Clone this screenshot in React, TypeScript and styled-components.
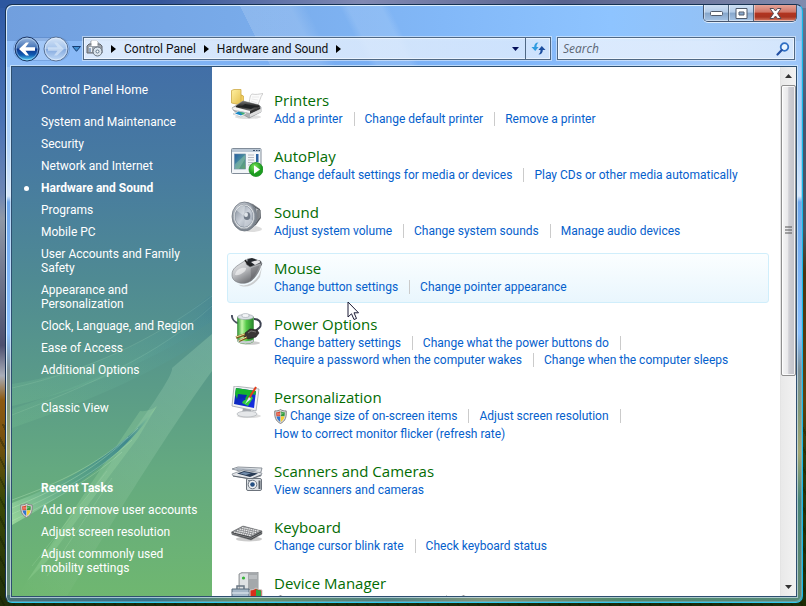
import React from 'react';
import styled, { createGlobalStyle, css } from 'styled-components';

const GlobalStyle = createGlobalStyle`
  *, *::before, *::after { box-sizing: border-box; }
  html, body, #root { height: 100%; }
  body {
    margin: 0;
    overflow: hidden;
    font-family: Roboto, "Open Sans", sans-serif;
    font-size: 12px;
    line-height: 14px;
  }
  button { margin: 0; padding: 0; border: 0; background: none; font: inherit; color: inherit; }
  a { color: inherit; text-decoration: none; }
  a:hover { text-decoration: underline; }
  ul { margin: 0; padding: 0; list-style: none; }
  svg { display: block; flex: none; }
`;

const Desktop = styled.div`
  height: 100vh;
  padding: 4px 3px 3px 5px;
  background:
    linear-gradient(90deg, #2c57a0, #35569b 20%, #8189b2 45%, #58638f 70%, #828bad) top / 100% 8px no-repeat,
    repeating-linear-gradient(63deg, transparent 0 3px, rgba(10, 20, 0, 0.3) 3px 5px, transparent 5px 9px) bottom / 100% 30% no-repeat,
    linear-gradient(180deg, #2f5aa6 0, #4a72b4 20%, #6d86b5 32%, #8f98a6 36%, #4d5070 57%, #a9aeb8 62%, #8d5a12 66%, #7a5210 72%, #3c4a08 82%, #20300a 100%) left / 8px 100% no-repeat,
    linear-gradient(180deg, #6f7794 0, #46536f 20%, #4b5260 38%, #4a3210 45%, #62400c 66%, #2f3806 76%, #1c2c05 100%) right / 8px 100% no-repeat,
    #1c2c0a;
`;

const Frame = styled.div`
  position: relative;
  display: flex;
  flex-direction: column;
  height: 100%;
  padding: 0 5px 5px;
  border: 1px solid #173252;
  border-right-color: #14b9ea;
  border-bottom-color: #2fc9ee;
  border-radius: 7px;
  box-shadow: inset 1px 1px 0 rgba(235, 248, 255, 0.85), inset -1px -1px 0 rgba(120, 190, 220, 0.5);
  background:
    linear-gradient(63deg, transparent 0 32%, rgba(255, 255, 255, 0.14) 32% 38%, transparent 40% 44%, rgba(255, 255, 255, 0.12) 45% 49%, transparent 50%) top / 100% 62px no-repeat,
    linear-gradient(90deg, #719fde 0, #78aae9 28%, #82b8f8 55%, #8ec4ff 76%, #98bfee 100%) top / 100% 36px no-repeat,
    linear-gradient(90deg, #8ebcf7 0, #78adf2 40%, #80b6fa 65%, #a8ccfb 88%, #9dc6f9 100%) 0 36px / 100% 26px no-repeat,
    linear-gradient(90deg, #497074, #34748b 18%, #67946d 30%, #4f8280 48%, #80977c 60%, #4f896c 78%, #588b79) bottom / 100% 7px no-repeat,
    linear-gradient(180deg, #93c2fc 0, #b0d2fa 23%, #d8e7fb 32%, #6fa7ec 33%, #8cc0ff 55%, #7d9098 61%, #859b7b 68%, #a5a875 75%, #478477 83%, #668970 100%);
`;

const TitleBar = styled.header`
  display: flex;
  justify-content: flex-end;
  height: 31px;
  flex: none;
`;

const CaptionButtons = styled.div`
  display: flex;
  height: 17px;
  overflow: hidden;
  border: 1px solid #46566f;
  border-top: 0;
  border-radius: 0 0 5px 5px;
  box-shadow: 0 1px 0 rgba(255, 255, 255, 0.7);
`;

const CaptionButton = styled.button<{ $close?: boolean }>`
  display: grid;
  place-items: center;
  width: ${p => (p.$close ? 42 : 25)}px;
  border-right: ${p => (p.$close ? '0' : '1px solid #53677f')};
  box-shadow: inset 1px -1px 0 rgba(255, 255, 255, 0.45);
  background: ${p =>
    p.$close
      ? 'linear-gradient(180deg, #e5a397 0, #cf7566 45%, #b23420 50%, #a83421 75%, #d97e66 100%)'
      : 'linear-gradient(180deg, #cfdff2 0, #b2cbe8 45%, #86a6cb 50%, #a5c3e5 100%)'};
`;

const NavBar = styled.nav`
  display: flex;
  align-items: center;
  height: 25px;
  padding: 0 2px 0 3px;
  flex: none;
`;

const TravelGroup = styled.div`
  display: flex;
  align-items: center;
  gap: 3px;
  height: 22px;
  border-radius: 12px;
  background: rgba(255, 255, 255, 0.2);
  box-shadow: 0 0 0 1px rgba(60, 100, 160, 0.25);
`;

const TravelButton = styled.button`
  height: 26px;
`;

const HistoryButton = styled.button`
  display: grid;
  place-items: center;
  width: 14px;
  height: 24px;
`;

const fieldBox = css`
  border: 1px solid #4f6884;
  outline: 1px solid rgba(255, 255, 255, 0.45);
  box-shadow: inset 0 0 0 1px rgba(255, 255, 255, 0.55);
  background: linear-gradient(90deg, rgba(240, 246, 254, 0.8), rgba(224, 237, 253, 0.8));
`;

const AddressBar = styled.div`
  ${fieldBox}
  display: flex;
  align-items: center;
  flex: 1;
  min-width: 0;
  height: 23px;
  padding-left: 2px;
`;

const Crumb = styled.a`
  color: #111;
  white-space: nowrap;
`;

const Chevron = styled.svg`
  margin: 0 8px;
`;

const DropButton = styled.button`
  display: grid;
  place-items: center;
  width: 19px;
  height: 21px;
  margin-left: auto;
`;

const RefreshButton = styled(DropButton)`
  width: 25px;
  margin-left: 0;
  border-left: 1px solid #4f6884;
`;

const SearchBox = styled.label`
  ${fieldBox}
  display: flex;
  align-items: center;
  flex: 0 1 238px;
  min-width: 0;
  height: 23px;
  margin-left: 6px;
  padding: 0 4px 0 5px;
`;

const SearchInput = styled.input`
  flex: 1;
  min-width: 0;
  padding: 0;
  border: 0;
  outline: 0;
  background: none;
  font: italic 12px/15px "Open Sans", "Noto Sans", sans-serif;
  &::placeholder { color: #5d6673; opacity: 1; }
`;

const Client = styled.div`
  display: flex;
  flex: 1;
  min-height: 0;
  margin-top: 5px;
  overflow: hidden;
  border: 1px solid #2e4f70;
  outline: 1px solid rgba(220, 238, 250, 0.65);
  background: #fff;
`;

const Sidebar = styled.aside`
  position: relative;
  display: flex;
  flex-direction: column;
  flex: none;
  width: 200px;
  padding: 16px 0 0 29px;
  color: #fff;
  background: linear-gradient(180deg, #426fa7 0, #477ba0 20%, #4f8a93 40%, #5a9b88 60%, #64a980 76%, #6fb770 100%);
`;

const Aurora = styled.svg`
  position: absolute;
  inset: auto 0 0 0;
`;

const TaskList = styled.ul<{ $top: number }>`
  position: relative;
  display: flex;
  flex-direction: column;
  gap: 8px;
  margin-top: ${p => p.$top}px;
`;

const Task = styled.li<{ $bold?: boolean }>`
  display: flex;
  position: relative;
  font-weight: ${p => (p.$bold ? 700 : 400)};
  white-space: nowrap;
`;

const Marker = styled.span`
  position: absolute;
  top: 0;
  left: -21px;
  display: grid;
  place-items: center;
  width: 13px;
  height: 15px;
`;

const Dot = styled.i`
  width: 5px;
  height: 5px;
  border-radius: 50%;
  background: #fff;
`;

const Heading = styled.h2`
  position: relative;
  margin: 66px 0 0;
  font-size: 12px;
  line-height: 14px;
`;

const Content = styled.main`
  display: flex;
  flex-direction: column;
  gap: 6px;
  flex: 1;
  min-width: 0;
  padding: 18px 11px 0 15px;
  overflow: hidden;
`;

const Category = styled.section<{ $hot?: boolean }>`
  display: flex;
  flex: none;
  gap: 11px;
  padding: 3px 3px 7px;
  border: 1px solid ${p => (p.$hot ? '#d0eefb' : 'transparent')};
  border-radius: 3px;
  background: ${p => (p.$hot ? 'linear-gradient(180deg, #fbfeff, #e9f6fd)' : 'none')};
`;

const CategoryBody = styled.div`
  padding-top: 1px;
  min-width: 0;
`;

const CategoryTitle = styled.h3`
  margin: 0;
  color: #036c03;
  font-family: "Open Sans", "Noto Sans", sans-serif;
  font-size: 15px;
  font-weight: 400;
  line-height: 20px;
  white-space: nowrap;
`;

const LinkRow = styled.div<{ $shield?: boolean }>`
  display: flex;
  align-items: center;
  height: ${p => (p.$shield ? 18 : 17)}px;
`;

const TaskLink = styled.a`
  display: flex;
  align-items: center;
  gap: 3px;
  color: #0560cc;
  white-space: nowrap;
`;

const Divider = styled.i`
  width: 1px;
  height: 14px;
  margin: 0 10px 0 11px;
  background: #cbcbcb;
`;

const ScrollBar = styled.div`
  display: flex;
  flex-direction: column;
  flex: none;
  width: 16px;
  border-left: 1px solid #e4e4e4;
  background: linear-gradient(90deg, #e9e9e9, #f2f2f2);
`;

const ScrollButton = styled.button`
  display: grid;
  place-items: center;
  height: 18px;
`;

const ScrollTrack = styled.div`
  flex: 1;
`;

const ScrollThumb = styled.div`
  display: grid;
  place-items: center;
  height: 59%;
  border: 1px solid #8f8f8f;
  border-radius: 2px;
  box-shadow: inset 0 0 0 1px rgba(255, 255, 255, 0.8);
  background: linear-gradient(90deg, #f6f6f6 0, #e8e8ea 45%, #cfcfd4 52%, #c1c1c8 100%);
`;

const Cursor = styled.svg`
  position: absolute;
  left: 341px;
  top: 296px;
`;

const Shield = () => (
  <svg width="13" height="15" viewBox="0 0 13 15" aria-hidden="true">
    <path d="M6.500 .5C5 1.600 3 2 .8 1.900C.4 8 1.500 12 6.500 14.500C11.500 12 12.600 8 12.200 1.900C10 2 8 1.600 6.500 .5Z" fill="#d9d9d9" stroke="#858585" />
    <path d="M6.200 2.200C5 3 3.800 3.300 2.300 3.300C2.200 5 2.300 6.200 2.500 7.300H6.200Z" fill="#dc3a1f" />
    <path d="M6.800 2.200C8 3 9.200 3.300 10.700 3.300C10.800 5 10.700 6.200 10.500 7.300H6.800Z" fill="#329b3c" />
    <path d="M2.600 7.600H6.200V12.900C4.200 11.700 3 10 2.600 7.600Z" fill="#3175cf" />
    <path d="M10.400 7.600H6.800V12.900C8.800 11.700 10 10 10.400 7.600Z" fill="#f7cf2d" />
    <path d="M3 3.800C6 3.500 8 3 10 4C8 6 5 7 2.800 6.500Z" fill="#fff" opacity=".3" />
  </svg>
);

const Icon = ({ children }: { children: React.ReactNode }) => (
  <svg width="32" height="32" viewBox="0 0 32 32" aria-hidden="true">{children}</svg>
);

const PrinterIcon = () => (
  <Icon>
    <defs>
      <linearGradient id="pr-f" x2="1" y2="1"><stop stopColor="#fff0a0" /><stop offset="1" stopColor="#e2ba45" /></linearGradient>
      <linearGradient id="pr-b" x2="0" y2="1"><stop stopColor="#777" /><stop offset=".5" stopColor="#252525" /><stop offset="1" stopColor="#9a9a9a" /></linearGradient>
    </defs>
    <ellipse cx="17" cy="28" rx="13" ry="2" fill="#ccc" opacity=".6" />
    <path d="M.5 1.500L3 .5H10V6L12 7V14L10 16L.5 14Z" fill="url(#pr-f)" stroke="#cda947" strokeWidth=".8" />
    <path d="M10 6V15L12.500 13V7Z" fill="#f2cf60" stroke="#c59f39" strokeWidth=".5" />
    <path d="M18 14C19 9 19 6 21 5C25 6 28 5 32 4.500C29 8 29 13 26 17Z" fill="#fcfcfc" stroke="#bcbcbc" strokeWidth=".7" />
    <path d="M21 8L28 8M20.500 10L27 11M20 12L26 14" stroke="#dedede" strokeWidth=".6" />
    <path d="M1 19L12 12L28 16L30 18V23L18 29L13 26L3 22Z" fill="#aeb0b3" stroke="#818488" strokeWidth=".6" />
    <path d="M5 17L12 12L28 16L29 18L19 23L5 19Z" fill="url(#pr-b)" />
    <path d="M14 15L25 17L20 20L10 18Z" fill="#202224" />
    <path d="M1 19L4 18L19 22L19 24L3 21Z" fill="#f5f5f5" />
    <path d="M19 22L29 18V20L19 25Z" fill="#333" />
    <path d="M2 25L7 22L16 24L10 28Z" fill="#fff" stroke="#aaa" strokeWidth=".5" />
    <path d="M4 24.500L7.500 22.500L14 24L10 26.500Z" fill="#1886c5" />
    <path d="M8 23L14 24L12 26Z" fill="#47ad67" />
    <path d="M19 25L30 20V23L19 28Z" fill="#ddd" />
  </Icon>
);

const AutoPlayIcon = () => (
  <Icon>
    <defs>
      <linearGradient id="ap-s" x2="1" y2="1"><stop stopColor="#245ca0" /><stop offset=".5" stopColor="#4a8fa0" /><stop offset="1" stopColor="#68a865" /></linearGradient>
      <radialGradient id="ap-g" cx=".4" cy=".3"><stop stopColor="#7be65a" /><stop offset="1" stopColor="#1c9c20" /></radialGradient>
    </defs>
    <rect x=".5" y="3.500" width="29.500" height="25" rx="1" fill="#f2f5f8" stroke="#818c99" />
    <path d="M1 4H29.500V7H1Z" fill="#bbc8d6" />
    <path d="M22 5.500H24M25 5.500H26.500M27.500 5.500H29" stroke="#3c526c" />
    <rect x="3.500" y="9" width="11" height="15" fill="url(#ap-s)" stroke="#6787a2" strokeWidth=".6" />
    <path d="M4 19L14 10V14L8 24H4Z" fill="#b2ddad" opacity=".35" />
    <path d="M17 10H23M17 12.500H23M17 15H23M17 17.500H22M17 20H20" stroke="#b5b9bf" />
    <rect x="25" y="9" width="2.500" height="8" fill="#2d63a1" />
    <circle cx="25" cy="24.500" r="7" fill="url(#ap-g)" stroke="#23902a" strokeWidth=".8" />
    <path d="M23 20.300L29 24.500L23 28.700Z" fill="#fff" />
  </Icon>
);

const SoundIcon = () => (
  <Icon>
    <defs>
      <radialGradient id="so-r" cx=".4" cy=".35"><stop stopColor="#eef0f2" /><stop offset=".6" stopColor="#b7bdc6" /><stop offset="1" stopColor="#7f8791" /></radialGradient>
      <linearGradient id="so-c" x2="1" y2="1"><stop stopColor="#818b98" /><stop offset=".5" stopColor="#cbd1da" /><stop offset="1" stopColor="#9099a6" /></linearGradient>
    </defs>
    <ellipse cx="21" cy="28" rx="10" ry="3" fill="#ddd" />
    <path d="M15 1L22 3L29 8L30 17L25 24L16 30Z" fill="#7a7e84" />
    <path d="M22 5L29 9V17L24 24" fill="#b6b9bd" stroke="#555a60" />
    <path d="M24 7L25 22M27 9V20" stroke="#4e5359" />
    <ellipse cx="13.500" cy="15.500" rx="12.500" ry="14.500" fill="url(#so-r)" stroke="#747b84" strokeWidth=".8" />
    <ellipse cx="13" cy="15.500" rx="10.500" ry="12.300" fill="#f0f2f4" stroke="#8f969f" strokeWidth=".7" />
    <ellipse cx="13" cy="15.500" rx="9" ry="10.800" fill="url(#so-c)" stroke="#717c8a" strokeWidth=".6" />
    <path d="M13 15L5 9C6 6 10 4 14 5Z" fill="#edf1f5" opacity=".45" />
    <path d="M14 17L22 19C20 23 17 26 13 26Z" fill="#dde2e8" opacity=".45" />
    <ellipse cx="16" cy="15" rx="3.300" ry="4" fill="#717b88" />
    <ellipse cx="15" cy="13.700" rx="2" ry="2.400" fill="#dfe4e9" />
  </Icon>
);

const MouseIcon = () => (
  <Icon>
    <defs>
      <linearGradient id="mo" x2=".7" y2="1"><stop stopColor="#f7f7f7" /><stop offset=".45" stopColor="#c4c6c9" /><stop offset="1" stopColor="#5c5e62" /></linearGradient>
    </defs>
    <path d="M6 27C16 31 23 26 28 18L31 10L29 20C24 27 18 31 10 29Z" fill="#bbb" opacity=".7" />
    <path d="M16 2L21 1L30 4L31 8C27 9 26 14 22 16L15 9Z" fill="#25282d" />
    <path d="M1 18C1 11 6 9 12 5L17 2L15 7L19 10L27 7L31 6C29 11 28 15 24 20C19 27 10 28 4 24C2 22.500 1 20.500 1 18Z" fill="url(#mo)" stroke="#76797e" strokeWidth=".6" />
    <path d="M20 5L27 3L30 5L24 8Z" fill="#e4e4e6" />
    <path d="M14 3L16 6L19 8L21 8" fill="none" stroke="#222" strokeWidth="1.500" />
    <path d="M4 18C5 12 11 10 15 11C16 14 9 19 4 18Z" fill="#fff" opacity=".55" />
    <path d="M20 11C19 15 21 19 19 23C24 20 27 13 29 8Z" fill="#4c4e53" opacity=".35" />
  </Icon>
);

const PowerIcon = () => (
  <Icon>
    <defs>
      <linearGradient id="po" x2="1"><stop stopColor="#2f9a35" /><stop offset=".28" stopColor="#c4f7a8" /><stop offset=".55" stopColor="#56ca49" /><stop offset="1" stopColor="#27862c" /></linearGradient>
    </defs>
    <ellipse cx="19" cy="30" rx="10" ry="1.800" fill="#ccc" />
    <path d="M.8 2C1 7 3 9 8 10.500" fill="none" stroke="#4c5163" strokeWidth="2" />
    <path d="M6.500 4V28C8 31.500 21 31.500 22.500 28V4Z" fill="url(#po)" stroke="#3f8a3d" strokeWidth=".6" />
    <path d="M6.500 26V28C8 31.500 21 31.500 22.500 28V26C20 29 9 29 6.500 26Z" fill="#c9ced3" />
    <ellipse cx="14.500" cy="4" rx="8" ry="2.600" fill="#dce1e6" stroke="#98a0a8" strokeWidth=".6" />
    <path d="M11 1.500C12 .3 17 .3 18 1.500V3.500C17 4.800 12 4.800 11 3.500Z" fill="#f4f6f8" stroke="#9aa3ab" strokeWidth=".6" />
    <path d="M23 6C28 6 30.500 9 29.500 13C28.500 16 25 16 24.500 19" fill="none" stroke="#3c4150" strokeWidth="2" />
    <path d="M14 20L19 16L26 17L28 20L25 24L17 26L13 24Z" fill="#3a3735" stroke="#1c1a19" strokeWidth=".6" />
    <path d="M17 20L20 18L25 19" fill="none" stroke="#8a8784" strokeWidth=".8" />
    <path d="M14 21.500L5 24.500M16 24.500L8 28" stroke="#7a5b1d" strokeWidth="2.400" />
    <path d="M13.500 21L5 24M15.500 24L8 27.500" stroke="#f3dfa0" />
  </Icon>
);

const DisplayIcon = () => (
  <Icon>
    <defs>
      <linearGradient id="di" x2="1" y2="1"><stop stopColor="#0726a4" /><stop offset="1" stopColor="#152ee9" /></linearGradient>
    </defs>
    <ellipse cx="18" cy="30" rx="12" ry="2" fill="#ddd" />
    <path d="M12 22H20L20 27H11Z" fill="#a4a8ae" />
    <ellipse cx="16" cy="28" rx="10" ry="3" fill="#e5e7e9" stroke="#a5a9ae" strokeWidth=".6" />
    <path d="M3 0L28 3L25 25L1 20Z" fill="#f2f3f4" stroke="#a0a4aa" strokeWidth=".8" />
    <path d="M5 2L25 5L23 22L3 18Z" fill="url(#di)" />
    <path d="M5 2L25 5L24.500 9C20 7 18 9 16 14L10 11L6 13L4 8Z" fill="#17b52e" />
    <path d="M7 8L16 9L14 13L19 14L15 18L12 12L6 13Z" fill="#0b27b2" />
    <path d="M12 15L20 10L22 12L17 20L11 17Z" fill="#30ca3c" />
    <path d="M17 14L25 1" stroke="#e13d1b" strokeWidth="2" />
    <path d="M14 18L18 11L20 13Z" fill="#d8eff9" />
  </Icon>
);

const ScannerIcon = () => (
  <Icon>
    <g transform="translate(0 5)">
      <path d="M1 4L7 2L31 3L30 7L24 10Z" fill="#dfe3e7" stroke="#767d86" strokeWidth=".8" />
      <path d="M6 3L27 4.500L22 7.500L3 4.500Z" fill="#aab3be" />
      <path d="M1 9L12 5L31 8L30 11L20 14L2 11Z" fill="#e4e6e9" stroke="#7d848c" strokeWidth=".7" />
      <path d="M6 8.500L13 6L27 8.500L19 12Z" fill="#293c55" />
      <path d="M9 8.500L13 7L20 8.300L15 10Z" fill="#718cab" />
      <path d="M2 11L20 14L30 10" fill="none" stroke="#5f6770" />
      <rect x="15.500" y="13.500" width="15" height="12" rx="1.500" fill="#dde1e5" stroke="#6c737c" />
      <path d="M17 15H21V16.500H17Z" fill="#7a828b" />
      <circle cx="21.500" cy="19.500" r="4.300" fill="#f3f4f6" stroke="#6d7681" />
      <circle cx="21.500" cy="19.500" r="2.300" fill="#244f82" />
      <rect x="27.500" y="15.500" width="2" height="8.500" fill="#59616b" />
    </g>
  </Icon>
);

const KeyboardIcon = () => (
  <Icon>
    <g transform="translate(0 5)">
      <ellipse cx="18" cy="18" rx="13" ry="2.500" fill="#ccc" />
      <path d="M.5 11L12 5L31 10V13L20 19L1 13.500Z" fill="#3c3e41" stroke="#77797b" strokeWidth=".5" />
      <path d="M.5 11L12 5L31 10L20 16Z" fill="#85878a" />
      <path d="M3 11L20 14.800M6 9.500L23 13.300M8.500 8L25.500 11.800M11 6.500L28 10.300" stroke="#ececec" strokeWidth="1.200" strokeDasharray="1.600 .6" />
      <path d="M1 12.500L20 17.300L31 11.500" fill="none" stroke="#a9abad" strokeWidth=".6" />
    </g>
  </Icon>
);

const DeviceIcon = () => (
  <Icon>
    <path d="M8 2L12 0H27V28H8Z" fill="#c6c9cc" stroke="#818589" strokeWidth=".8" />
    <path d="M17 1H27V28H17Z" fill="#a4a8ab" />
    <path d="M9 2H17V24H9Z" fill="#dfe2e4" />
    <path d="M18 4H26M18 6H26" stroke="#d1d4d7" />
    <circle cx="12.500" cy="6" r="1.600" fill="#36b438" />
    <path d="M6 17V14H13V17" fill="none" stroke="#6a7784" strokeWidth="1.500" />
    <path d="M1 17H18V30H1Z" fill="#a5b7c7" stroke="#586a7b" />
    <path d="M1 21H18" stroke="#e8eff4" />
    <path d="M19 18Q23 18 25 16Q27 18 31 18V27L25 31L19 27Z" fill="#d7301b" stroke="#ccc" />
    <path d="M25 17Q27 18.500 30 18.500V25H25Z" fill="#30a744" />
  </Icon>
);

type LinkItem = { text: string; shield?: boolean };
type CategoryData = { title: string; icon: React.ReactNode; rows: LinkItem[][]; hot?: boolean };

const categories: CategoryData[] = [
  { title: 'Printers', icon: <PrinterIcon />, rows: [[{ text: 'Add a printer' }, { text: 'Change default printer' }, { text: 'Remove a printer' }]] },
  { title: 'AutoPlay', icon: <AutoPlayIcon />, rows: [[{ text: 'Change default settings for media or devices' }, { text: 'Play CDs or other media automatically' }]] },
  { title: 'Sound', icon: <SoundIcon />, rows: [[{ text: 'Adjust system volume' }, { text: 'Change system sounds' }, { text: 'Manage audio devices' }]] },
  { title: 'Mouse', icon: <MouseIcon />, hot: true, rows: [[{ text: 'Change button settings' }, { text: 'Change pointer appearance' }]] },
  {
    title: 'Power Options', icon: <PowerIcon />,
    rows: [
      [{ text: 'Change battery settings' }, { text: 'Change what the power buttons do' }],
      [{ text: 'Require a password when the computer wakes' }, { text: 'Change when the computer sleeps' }],
    ],
  },
  {
    title: 'Personalization', icon: <DisplayIcon />,
    rows: [
      [{ text: 'Change size of on-screen items', shield: true }, { text: 'Adjust screen resolution' }],
      [{ text: 'How to correct monitor flicker (refresh rate)' }],
    ],
  },
  { title: 'Scanners and Cameras', icon: <ScannerIcon />, rows: [[{ text: 'View scanners and cameras' }]] },
  { title: 'Keyboard', icon: <KeyboardIcon />, rows: [[{ text: 'Change cursor blink rate' }, { text: 'Check keyboard status' }]] },
  { title: 'Device Manager', icon: <DeviceIcon />, rows: [[{ text: 'View hardware and devices', shield: true }, { text: 'Update device drivers', shield: true }]] },
];

const areas: React.ReactNode[] = [
  'System and Maintenance', 'Security', 'Network and Internet', 'Hardware and Sound', 'Programs', 'Mobile PC',
  <>User Accounts and Family<br />Safety</>, <>Appearance and<br />Personalization</>,
  'Clock, Language, and Region', 'Ease of Access', 'Additional Options',
];

const SidebarArt = () => (
  <Aurora width="200" height="300" viewBox="0 0 200 300" aria-hidden="true">
    <defs>
      <linearGradient id="au-a" x1="0" y1="1" x2="1" y2="0"><stop stopColor="#8fe0a0" stopOpacity=".25" /><stop offset="1" stopColor="#3c7f96" stopOpacity=".55" /></linearGradient>
      <linearGradient id="au-b" x1="0" y1="1" x2="1" y2="0"><stop stopColor="#b8f0b0" stopOpacity=".6" /><stop offset=".4" stopColor="#4f9c8c" stopOpacity=".5" /><stop offset=".75" stopColor="#34808e" stopOpacity=".85" /><stop offset="1" stopColor="#9ad69c" stopOpacity=".7" /></linearGradient>
      <linearGradient id="au-c" x1="0" y1="1" x2="1" y2="0"><stop stopColor="#fff" stopOpacity="0" /><stop offset="1" stopColor="#c9ffd0" stopOpacity=".2" /></linearGradient>
    </defs>
    <path d="M0 88C80 75 140 45 200 -2V25C150 60 80 92 0 110Z" fill="url(#au-a)" opacity=".55" />
    <path d="M0 113C80 86 145 60 200 8V38C155 70 80 105 0 132Z" fill="url(#au-a)" opacity=".5" />
    <path d="M200 38L160 72C163 84 80 190 5 300H55C110 210 160 130 200 75Z" fill="url(#au-c)" />
    <path d="M128 115Q137 116 145 110L126 142L90 190L35 265L15 285L80 186Z" fill="#b8efb4" opacity=".2" />
    <path d="M0 207C50 188 105 160 145 110C120 150 70 190 0 229Z" fill="url(#au-b)" />
    <g fill="none" stroke="#cdf5cb" strokeWidth="1">
      <path d="M0 204C50 186 85 168 116 141" opacity=".3" />
      <path d="M0 212C50 191 85 173 126 132" opacity=".3" />
      <path d="M0 218C50 196 85 176 120 144" opacity=".25" />
      <path d="M0 225C50 201 85 178 110 156" opacity=".25" />
      <path d="M0 92C75 75 140 45 200 0M0 119C75 90 145 60 200 10" opacity=".12" />
      <path d="M20 270L95 175M35 280L100 182" opacity=".15" />
    </g>
  </Aurora>
);

const BackIcon = () => (
  <svg width="26" height="26" viewBox="0 0 26 26" aria-hidden="true">
    <defs><linearGradient id="bk" x2="0" y2="1"><stop stopColor="#9db9df" /><stop offset=".46" stopColor="#4272b6" /><stop offset=".5" stopColor="#0d358b" /><stop offset=".75" stopColor="#0f5cb3" /><stop offset="1" stopColor="#5fe0fd" /></linearGradient></defs>
    <circle cx="13" cy="13" r="12" fill="url(#bk)" stroke="#1d3765" />
    <circle cx="13" cy="13" r="10.800" fill="none" stroke="#c6e6fd" opacity=".5" />
    <path d="M5 13L12 6.500H15L11.500 11.200H21V14.800H11.500L15 19.500H12Z" fill="#fff" />
  </svg>
);

const ForwardIcon = () => (
  <svg width="26" height="26" viewBox="0 0 26 26" aria-hidden="true">
    <defs><linearGradient id="fw" x2="0" y2="1"><stop stopColor="#d5e4f7" /><stop offset=".48" stopColor="#a5c4ec" /><stop offset=".52" stopColor="#86abdf" /><stop offset="1" stopColor="#c4dcf8" /></linearGradient></defs>
    <circle cx="13" cy="13" r="12" fill="url(#fw)" stroke="#5a7396" />
    <circle cx="13" cy="13" r="10.800" fill="none" stroke="#e9f4ff" opacity=".6" />
    <path d="M21 13L14 6.500H11L14.500 11.200H5V14.800H14.500L11 19.500H14Z" fill="#d4e4f7" opacity=".75" />
  </svg>
);

const Arrow = () => (
  <Chevron width="5" height="8" viewBox="0 0 5 8" aria-hidden="true"><path d="M0 0L5 4L0 8Z" fill="#000" /></Chevron>
);

export default function App() {
  return (
    <>
      <GlobalStyle />
      <Desktop>
        <Frame>
          <TitleBar>
            <CaptionButtons>
              <CaptionButton aria-label="Minimize">
                <svg width="13" height="6" viewBox="0 0 13 6"><rect x=".5" y="1.500" width="12" height="4" rx="1" fill="#fff" stroke="#505b6c" /></svg>
              </CaptionButton>
              <CaptionButton aria-label="Maximize">
                <svg width="13" height="11" viewBox="0 0 13 11"><path fillRule="evenodd" d="M1 .5H12V10.500H1ZM4 4V7H9V4Z" fill="#fff" stroke="#505b6c" /></svg>
              </CaptionButton>
              <CaptionButton $close aria-label="Close">
                <svg width="13" height="11" viewBox="0 0 13 11"><path d="M1 .5H4.500L6.500 3L8.500 .5H12L8.500 5.500L12 10.500H8.500L6.500 8L4.500 10.500H1L4.500 5.500Z" fill="#fff" stroke="#544c55" /></svg>
              </CaptionButton>
            </CaptionButtons>
          </TitleBar>
          <NavBar>
            <TravelGroup>
              <TravelButton aria-label="Back"><BackIcon /></TravelButton>
              <TravelButton aria-label="Forward"><ForwardIcon /></TravelButton>
            </TravelGroup>
            <HistoryButton aria-label="Recent pages">
              <svg width="9" height="6" viewBox="0 0 9 6"><path d="M.5 .5H8.500L4.500 5.300Z" fill="#3f8fd4" stroke="#173e73" /></svg>
            </HistoryButton>
            <AddressBar>
              <svg width="17" height="17" viewBox="0 0 17 17" aria-hidden="true">
                <path d="M5 1H11L12 2V7H5Z" fill="#fff" stroke="#8a8d91" />
                <path d="M1 6L3 4H14L16 6V13H1Z" fill="#9da3ab" stroke="#62676e" />
                <path d="M5.500 .5H11.500V6H5.500Z" fill="#fff" />
                <path d="M3 7H6V12H3Z" fill="#eef1f4" />
                <path d="M4 8V12" stroke="#41669a" />
                <circle cx="11.500" cy="11.500" r="4.500" fill="#dce5ed" stroke="#66717d" />
                <circle cx="11.500" cy="11.500" r="1.500" fill="#fff" stroke="#5e7387" />
              </svg>
              <Arrow /><Crumb href="#control-panel">Control Panel</Crumb>
              <Arrow /><Crumb href="#hardware">Hardware and Sound</Crumb>
              <Arrow />
              <DropButton aria-label="Previous locations">
                <svg width="7" height="4" viewBox="0 0 7 4"><path d="M0 0H7L3.500 4Z" fill="#04105a" /></svg>
              </DropButton>
              <RefreshButton aria-label="Refresh">
                <svg width="15" height="13" viewBox="0 0 15 13">
                  <path d="M7.500 .5C4.500 .5 3.200 2.500 3.200 5H.5L4.200 9L7.600 5H5.500C5.500 3 6 1.700 7.500 .5Z" fill="#2f9be0" />
                  <path d="M7.500 12.500C10.500 12.500 11.800 10.500 11.800 8H14.500L10.800 4L7.400 8H9.500C9.500 10 9 11.300 7.500 12.500Z" fill="#1d4fa0" />
                </svg>
              </RefreshButton>
            </AddressBar>
            <SearchBox>
              <SearchInput type="text" placeholder="Search" aria-label="Search" />
              <svg width="14" height="14" viewBox="0 0 14 14" aria-hidden="true">
                <circle cx="8.500" cy="5" r="3.800" fill="#e9f5ff" stroke="#2f6fc4" strokeWidth="1.800" />
                <path d="M5.800 8L1.500 12.500" stroke="#2450a3" strokeWidth="2.200" strokeLinecap="round" />
              </svg>
            </SearchBox>
          </NavBar>
          <Client>
            <Sidebar>
              <SidebarArt />
              <TaskList $top={0}><Task><a href="#home">Control Panel Home</a></Task></TaskList>
              <TaskList $top={18}>
                {areas.map((area, i) => (
                  <Task key={i} $bold={i === 3}>
                    {i === 3 && <Marker><Dot /></Marker>}
                    <a href={`#area-${i}`}>{area}</a>
                  </Task>
                ))}
              </TaskList>
              <TaskList $top={24}><Task><a href="#classic">Classic View</a></Task></TaskList>
              <Heading>Recent Tasks</Heading>
              <TaskList $top={8}>
                <Task><Marker><Shield /></Marker><a href="#accounts">Add or remove user accounts</a></Task>
                <Task><a href="#resolution">Adjust screen resolution</a></Task>
                <Task><a href="#mobility">Adjust commonly used<br />mobility settings</a></Task>
              </TaskList>
            </Sidebar>
            <Content>
              {categories.map(c => (
                <Category key={c.title} $hot={c.hot}>
                  {c.icon}
                  <CategoryBody>
                    <CategoryTitle>{c.title}</CategoryTitle>
                    {c.rows.map((row, r) => (
                      <LinkRow key={r} $shield={row.some(l => l.shield)}>
                        {row.map((l, i) => (
                          <React.Fragment key={l.text}>
                            <TaskLink href="#task">{l.shield && <Shield />}{l.text}</TaskLink>
                            {(i < row.length - 1 || r < c.rows.length - 1) && <Divider />}
                          </React.Fragment>
                        ))}
                      </LinkRow>
                    ))}
                  </CategoryBody>
                </Category>
              ))}
            </Content>
            <ScrollBar>
              <ScrollButton aria-label="Scroll up"><svg width="7" height="4" viewBox="0 0 7 4"><path d="M0 4H7L3.500 0Z" fill="#333" /></svg></ScrollButton>
              <ScrollTrack>
                <ScrollThumb><svg width="7" height="8" viewBox="0 0 7 8"><path d="M0 1H7M0 4H7M0 7H7" stroke="#555" /></svg></ScrollThumb>
              </ScrollTrack>
              <ScrollButton aria-label="Scroll down"><svg width="7" height="4" viewBox="0 0 7 4"><path d="M0 0H7L3.500 4Z" fill="#333" /></svg></ScrollButton>
            </ScrollBar>
          </Client>
          <Cursor width="13" height="20" viewBox="0 0 13 20" aria-hidden="true">
            <path d="M1 1V16L4.500 12.800L7 18.500L9.500 17.500L7 11.800H11.500Z" fill="#fff" stroke="#1b1b35" />
          </Cursor>
        </Frame>
      </Desktop>
    </>
  );
}
